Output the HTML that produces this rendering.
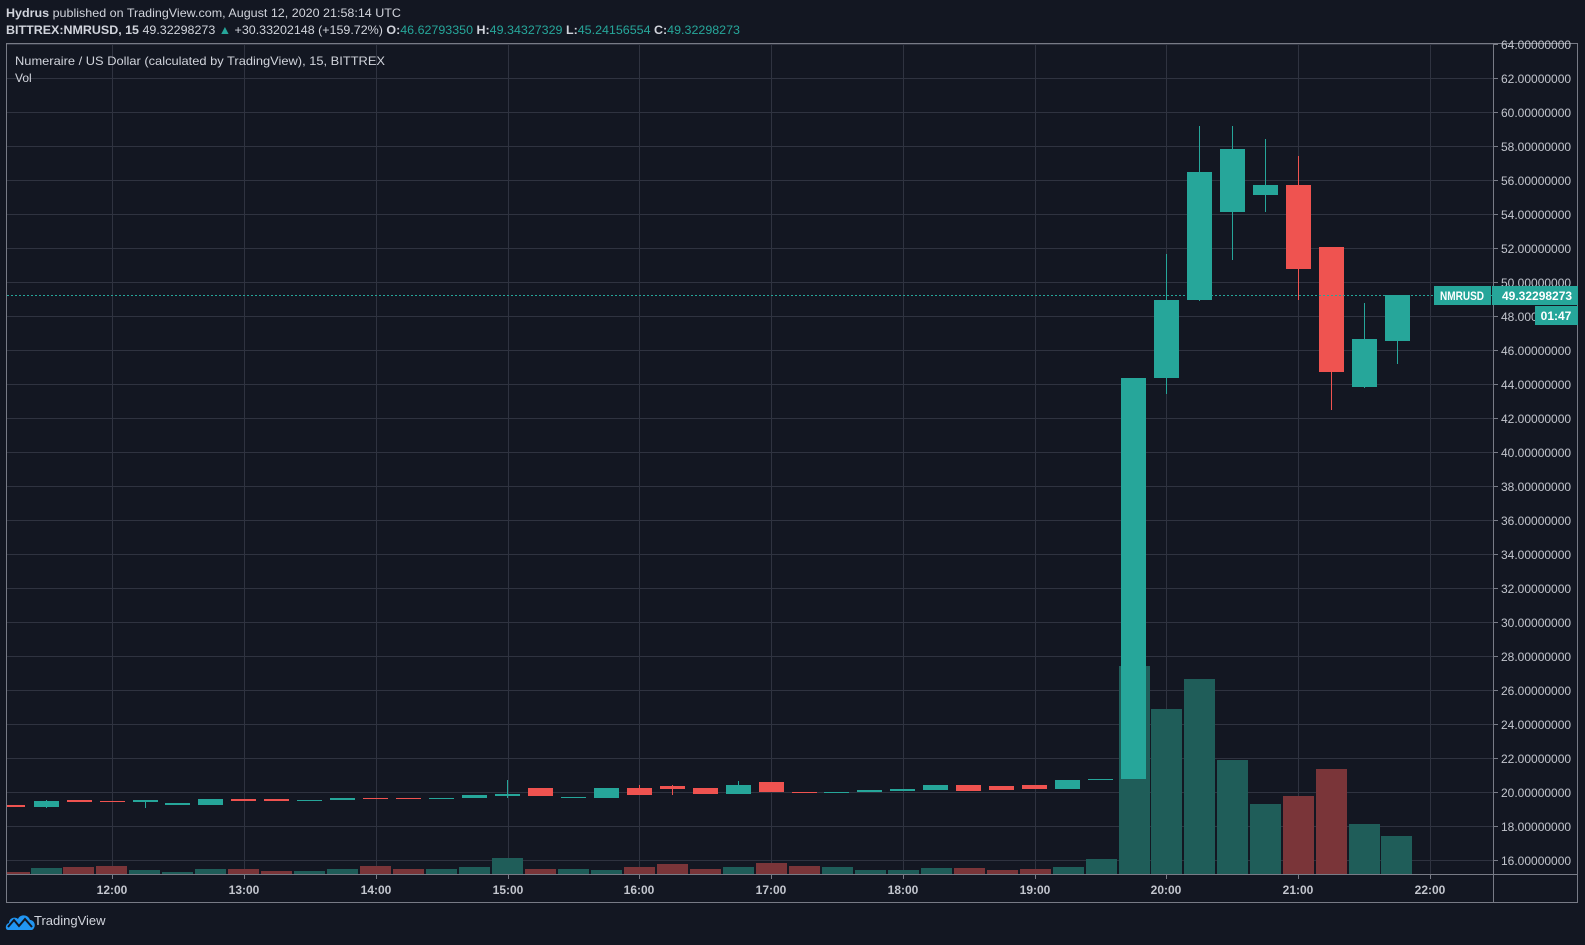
<!DOCTYPE html>
<html><head><meta charset="utf-8"><style>
body{margin:0;width:1585px;height:940px;background:#131722;overflow:hidden;font-family:"Liberation Sans",sans-serif;}
svg text{font-family:"Liberation Sans",sans-serif;}
</style></head><body>
<svg width="1585" height="940" xmlns="http://www.w3.org/2000/svg">
<rect width="1585" height="940" fill="#131722"/>
<text x="6" y="17" font-size="12" fill="#d1d4dc" textLength="395" lengthAdjust="spacingAndGlyphs"><tspan font-weight="bold">Hydrus</tspan> published on TradingView.com, August 12, 2020 21:58:14 UTC</text>
<text x="6" y="34" font-size="12" fill="#d1d4dc" textLength="734" lengthAdjust="spacingAndGlyphs"><tspan font-weight="bold">BITTREX:NMRUSD, 15</tspan> 49.32298273 <tspan fill="#26a69a">▲</tspan> +30.33202148 (+159.72%) <tspan font-weight="bold">O:</tspan><tspan fill="#26a69a">46.62793350</tspan> <tspan font-weight="bold">H:</tspan><tspan fill="#26a69a">49.34327329</tspan> <tspan font-weight="bold">L:</tspan><tspan fill="#26a69a">45.24156554</tspan> <tspan font-weight="bold">C:</tspan><tspan fill="#26a69a">49.32298273</tspan></text>
<g stroke="#2f3340" stroke-width="1">
<line x1="7" x2="1493" y1="44.5" y2="44.5"/><line x1="7" x2="1493" y1="78.5" y2="78.5"/><line x1="7" x2="1493" y1="112.5" y2="112.5"/><line x1="7" x2="1493" y1="146.5" y2="146.5"/><line x1="7" x2="1493" y1="180.5" y2="180.5"/><line x1="7" x2="1493" y1="214.5" y2="214.5"/><line x1="7" x2="1493" y1="248.5" y2="248.5"/><line x1="7" x2="1493" y1="282.5" y2="282.5"/><line x1="7" x2="1493" y1="316.5" y2="316.5"/><line x1="7" x2="1493" y1="350.5" y2="350.5"/><line x1="7" x2="1493" y1="384.5" y2="384.5"/><line x1="7" x2="1493" y1="418.5" y2="418.5"/><line x1="7" x2="1493" y1="452.5" y2="452.5"/><line x1="7" x2="1493" y1="486.5" y2="486.5"/><line x1="7" x2="1493" y1="520.5" y2="520.5"/><line x1="7" x2="1493" y1="554.5" y2="554.5"/><line x1="7" x2="1493" y1="588.5" y2="588.5"/><line x1="7" x2="1493" y1="622.5" y2="622.5"/><line x1="7" x2="1493" y1="656.5" y2="656.5"/><line x1="7" x2="1493" y1="690.5" y2="690.5"/><line x1="7" x2="1493" y1="724.5" y2="724.5"/><line x1="7" x2="1493" y1="758.5" y2="758.5"/><line x1="7" x2="1493" y1="792.5" y2="792.5"/><line x1="7" x2="1493" y1="826.5" y2="826.5"/><line x1="7" x2="1493" y1="860.5" y2="860.5"/>
<line y1="43" y2="874" x1="112.5" x2="112.5"/><line y1="43" y2="874" x1="244.5" x2="244.5"/><line y1="43" y2="874" x1="376.5" x2="376.5"/><line y1="43" y2="874" x1="508.5" x2="508.5"/><line y1="43" y2="874" x1="639.5" x2="639.5"/><line y1="43" y2="874" x1="771.5" x2="771.5"/><line y1="43" y2="874" x1="903.5" x2="903.5"/><line y1="43" y2="874" x1="1035.5" x2="1035.5"/><line y1="43" y2="874" x1="1166.5" x2="1166.5"/><line y1="43" y2="874" x1="1298.5" x2="1298.5"/><line y1="43" y2="874" x1="1430.5" x2="1430.5"/>
</g>
<text x="15" y="65" font-size="12" fill="#d1d4dc" textLength="370" lengthAdjust="spacingAndGlyphs">Numeraire / US Dollar (calculated by TradingView), 15, BITTREX</text>
<text x="15" y="82" font-size="12" fill="#d1d4dc">Vol</text>
<g>
<rect x="7" y="872" width="23" height="2" fill="#7a3539"/>
<rect x="31" y="868" width="31" height="6" fill="#1f5d59"/>
<rect x="63" y="867" width="31" height="7" fill="#7a3539"/>
<rect x="96" y="866" width="31" height="8" fill="#7a3539"/>
<rect x="129" y="870" width="31" height="4" fill="#1f5d59"/>
<rect x="162" y="872" width="31" height="2" fill="#1f5d59"/>
<rect x="195" y="869" width="31" height="5" fill="#1f5d59"/>
<rect x="228" y="869" width="31" height="5" fill="#7a3539"/>
<rect x="261" y="871" width="31" height="3" fill="#7a3539"/>
<rect x="294" y="871" width="31" height="3" fill="#1f5d59"/>
<rect x="327" y="869" width="31" height="5" fill="#1f5d59"/>
<rect x="360" y="866" width="31" height="8" fill="#7a3539"/>
<rect x="393" y="869" width="31" height="5" fill="#7a3539"/>
<rect x="426" y="869" width="31" height="5" fill="#1f5d59"/>
<rect x="459" y="867" width="31" height="7" fill="#1f5d59"/>
<rect x="492" y="858" width="31" height="16" fill="#1f5d59"/>
<rect x="525" y="869" width="31" height="5" fill="#7a3539"/>
<rect x="558" y="869" width="31" height="5" fill="#1f5d59"/>
<rect x="591" y="870" width="31" height="4" fill="#1f5d59"/>
<rect x="624" y="867" width="31" height="7" fill="#7a3539"/>
<rect x="657" y="864" width="31" height="10" fill="#7a3539"/>
<rect x="690" y="869" width="31" height="5" fill="#7a3539"/>
<rect x="723" y="867" width="31" height="7" fill="#1f5d59"/>
<rect x="756" y="863" width="31" height="11" fill="#7a3539"/>
<rect x="789" y="866" width="31" height="8" fill="#7a3539"/>
<rect x="822" y="867" width="31" height="7" fill="#1f5d59"/>
<rect x="855" y="870" width="31" height="4" fill="#1f5d59"/>
<rect x="888" y="870" width="31" height="4" fill="#1f5d59"/>
<rect x="921" y="868" width="31" height="6" fill="#1f5d59"/>
<rect x="954" y="868" width="31" height="6" fill="#7a3539"/>
<rect x="987" y="870" width="31" height="4" fill="#7a3539"/>
<rect x="1020" y="869" width="31" height="5" fill="#7a3539"/>
<rect x="1053" y="867" width="31" height="7" fill="#1f5d59"/>
<rect x="1086" y="859" width="31" height="15" fill="#1f5d59"/>
<rect x="1119" y="666" width="31" height="208" fill="#1f5d59"/>
<rect x="1151" y="709" width="31" height="165" fill="#1f5d59"/>
<rect x="1184" y="679" width="31" height="195" fill="#1f5d59"/>
<rect x="1217" y="760" width="31" height="114" fill="#1f5d59"/>
<rect x="1250" y="804" width="31" height="70" fill="#1f5d59"/>
<rect x="1283" y="796" width="31" height="78" fill="#7a3539"/>
<rect x="1316" y="769" width="31" height="105" fill="#7a3539"/>
<rect x="1349" y="824" width="31" height="50" fill="#1f5d59"/>
<rect x="1381" y="836" width="31" height="38" fill="#1f5d59"/>
</g>
<g>
<rect x="7" y="805" width="18" height="2" fill="#ef5350"/>
<line x1="46.5" x2="46.5" y1="800" y2="808" stroke="#26a69a"/><rect x="34" y="801" width="25" height="6" fill="#26a69a"/>
<rect x="67" y="800" width="25" height="2" fill="#ef5350"/>
<rect x="100" y="801" width="25" height="1" fill="#ef5350"/>
<line x1="145.5" x2="145.5" y1="800" y2="808" stroke="#26a69a"/><rect x="133" y="800" width="25" height="2" fill="#26a69a"/>
<rect x="165" y="803" width="25" height="2" fill="#26a69a"/>
<rect x="198" y="799" width="25" height="6" fill="#26a69a"/>
<rect x="231" y="799" width="25" height="2" fill="#ef5350"/>
<rect x="264" y="799" width="25" height="2" fill="#ef5350"/>
<rect x="297" y="800" width="25" height="1" fill="#26a69a"/>
<rect x="330" y="798" width="25" height="2" fill="#26a69a"/>
<rect x="363" y="798" width="25" height="1" fill="#ef5350"/>
<rect x="396" y="798" width="25" height="1" fill="#ef5350"/>
<rect x="429" y="798" width="25" height="1" fill="#26a69a"/>
<rect x="462" y="795" width="25" height="3" fill="#26a69a"/>
<line x1="507.5" x2="507.5" y1="780" y2="798" stroke="#26a69a"/><rect x="495" y="794" width="25" height="2" fill="#26a69a"/>
<rect x="528" y="788" width="25" height="8" fill="#ef5350"/>
<rect x="561" y="797" width="25" height="1" fill="#26a69a"/>
<rect x="594" y="788" width="25" height="10" fill="#26a69a"/>
<line x1="639.5" x2="639.5" y1="785" y2="795" stroke="#ef5350"/><rect x="627" y="788" width="25" height="7" fill="#ef5350"/>
<line x1="672.5" x2="672.5" y1="785" y2="795" stroke="#ef5350"/><rect x="660" y="786" width="25" height="3" fill="#ef5350"/>
<rect x="693" y="788" width="25" height="6" fill="#ef5350"/>
<line x1="738.5" x2="738.5" y1="781" y2="794" stroke="#26a69a"/><rect x="726" y="785" width="25" height="9" fill="#26a69a"/>
<rect x="759" y="782" width="25" height="10" fill="#ef5350"/>
<rect x="792" y="792" width="25" height="1" fill="#ef5350"/>
<rect x="824" y="792" width="25" height="1" fill="#26a69a"/>
<rect x="857" y="790" width="25" height="2" fill="#26a69a"/>
<rect x="890" y="789" width="25" height="2" fill="#26a69a"/>
<rect x="923" y="785" width="25" height="5" fill="#26a69a"/>
<rect x="956" y="785" width="25" height="6" fill="#ef5350"/>
<rect x="989" y="786" width="25" height="4" fill="#ef5350"/>
<rect x="1022" y="785" width="25" height="4" fill="#ef5350"/>
<rect x="1055" y="780" width="25" height="9" fill="#26a69a"/>
<rect x="1088" y="779" width="25" height="1" fill="#26a69a"/>
<rect x="1121" y="378" width="25" height="401" fill="#26a69a"/>
<line x1="1166.5" x2="1166.5" y1="254" y2="394" stroke="#26a69a"/><rect x="1154" y="300" width="25" height="78" fill="#26a69a"/>
<line x1="1199.5" x2="1199.5" y1="126" y2="301" stroke="#26a69a"/><rect x="1187" y="172" width="25" height="128" fill="#26a69a"/>
<line x1="1232.5" x2="1232.5" y1="126" y2="260" stroke="#26a69a"/><rect x="1220" y="149" width="25" height="63" fill="#26a69a"/>
<line x1="1265.5" x2="1265.5" y1="139" y2="212" stroke="#26a69a"/><rect x="1253" y="185" width="25" height="10" fill="#26a69a"/>
<line x1="1298.5" x2="1298.5" y1="156" y2="300" stroke="#ef5350"/><rect x="1286" y="185" width="25" height="84" fill="#ef5350"/>
<line x1="1331.5" x2="1331.5" y1="247" y2="410" stroke="#ef5350"/><rect x="1319" y="247" width="25" height="125" fill="#ef5350"/>
<line x1="1364.5" x2="1364.5" y1="303" y2="388" stroke="#26a69a"/><rect x="1352" y="339" width="25" height="48" fill="#26a69a"/>
<line x1="1397.5" x2="1397.5" y1="295" y2="364" stroke="#26a69a"/><rect x="1385" y="295" width="25" height="46" fill="#26a69a"/>
</g>
<line x1="7" x2="1493" y1="295.5" y2="295.5" stroke="#26a69a" stroke-dasharray="2,2"/>
<g stroke="#787b86" fill="none">
<line x1="6.5" x2="6.5" y1="43" y2="903"/>
<line x1="6" x2="1578" y1="43.5" y2="43.5"/>
<line x1="1493.5" x2="1493.5" y1="43" y2="903"/>
<line x1="1577.5" x2="1577.5" y1="43" y2="903"/>
<line x1="6" x2="1578" y1="874.5" y2="874.5"/>
<line x1="6" x2="1578" y1="902.5" y2="902.5"/>
</g>
<g stroke="#787b86">
<line x1="1494" x2="1498" y1="44.5" y2="44.5"/><line x1="1494" x2="1498" y1="78.5" y2="78.5"/><line x1="1494" x2="1498" y1="112.5" y2="112.5"/><line x1="1494" x2="1498" y1="146.5" y2="146.5"/><line x1="1494" x2="1498" y1="180.5" y2="180.5"/><line x1="1494" x2="1498" y1="214.5" y2="214.5"/><line x1="1494" x2="1498" y1="248.5" y2="248.5"/><line x1="1494" x2="1498" y1="282.5" y2="282.5"/><line x1="1494" x2="1498" y1="316.5" y2="316.5"/><line x1="1494" x2="1498" y1="350.5" y2="350.5"/><line x1="1494" x2="1498" y1="384.5" y2="384.5"/><line x1="1494" x2="1498" y1="418.5" y2="418.5"/><line x1="1494" x2="1498" y1="452.5" y2="452.5"/><line x1="1494" x2="1498" y1="486.5" y2="486.5"/><line x1="1494" x2="1498" y1="520.5" y2="520.5"/><line x1="1494" x2="1498" y1="554.5" y2="554.5"/><line x1="1494" x2="1498" y1="588.5" y2="588.5"/><line x1="1494" x2="1498" y1="622.5" y2="622.5"/><line x1="1494" x2="1498" y1="656.5" y2="656.5"/><line x1="1494" x2="1498" y1="690.5" y2="690.5"/><line x1="1494" x2="1498" y1="724.5" y2="724.5"/><line x1="1494" x2="1498" y1="758.5" y2="758.5"/><line x1="1494" x2="1498" y1="792.5" y2="792.5"/><line x1="1494" x2="1498" y1="826.5" y2="826.5"/><line x1="1494" x2="1498" y1="860.5" y2="860.5"/>
</g>
<g font-size="12" fill="#c3c6ce">
<text x="1501" y="49">64.00000000</text><text x="1501" y="83">62.00000000</text><text x="1501" y="117">60.00000000</text><text x="1501" y="151">58.00000000</text><text x="1501" y="185">56.00000000</text><text x="1501" y="219">54.00000000</text><text x="1501" y="253">52.00000000</text><text x="1501" y="287">50.00000000</text><text x="1501" y="321">48.00000000</text><text x="1501" y="355">46.00000000</text><text x="1501" y="389">44.00000000</text><text x="1501" y="423">42.00000000</text><text x="1501" y="457">40.00000000</text><text x="1501" y="491">38.00000000</text><text x="1501" y="525">36.00000000</text><text x="1501" y="559">34.00000000</text><text x="1501" y="593">32.00000000</text><text x="1501" y="627">30.00000000</text><text x="1501" y="661">28.00000000</text><text x="1501" y="695">26.00000000</text><text x="1501" y="729">24.00000000</text><text x="1501" y="763">22.00000000</text><text x="1501" y="797">20.00000000</text><text x="1501" y="831">18.00000000</text><text x="1501" y="865">16.00000000</text>
</g>
<g stroke="#787b86"><line x1="112.5" x2="112.5" y1="875" y2="879"/><line x1="244.5" x2="244.5" y1="875" y2="879"/><line x1="376.5" x2="376.5" y1="875" y2="879"/><line x1="508.5" x2="508.5" y1="875" y2="879"/><line x1="639.5" x2="639.5" y1="875" y2="879"/><line x1="771.5" x2="771.5" y1="875" y2="879"/><line x1="903.5" x2="903.5" y1="875" y2="879"/><line x1="1035.5" x2="1035.5" y1="875" y2="879"/><line x1="1166.5" x2="1166.5" y1="875" y2="879"/><line x1="1298.5" x2="1298.5" y1="875" y2="879"/><line x1="1430.5" x2="1430.5" y1="875" y2="879"/></g>
<g font-size="12" font-weight="bold" fill="#c3c6ce" text-anchor="middle">
<text x="112" y="894">12:00</text><text x="244" y="894">13:00</text><text x="376" y="894">14:00</text><text x="508" y="894">15:00</text><text x="639" y="894">16:00</text><text x="771" y="894">17:00</text><text x="903" y="894">18:00</text><text x="1035" y="894">19:00</text><text x="1166" y="894">20:00</text><text x="1298" y="894">21:00</text><text x="1430" y="894">22:00</text>
</g>
<rect x="1434" y="286" width="57" height="19" fill="#26a69a"/>
<text x="1462" y="300" font-size="12" fill="#ffffff" text-anchor="middle" font-weight="bold" textLength="44" lengthAdjust="spacingAndGlyphs">NMRUSD</text>
<rect x="1492" y="286" width="86" height="19" fill="#26a69a"/>
<text x="1502" y="300" font-size="12" fill="#ffffff" font-weight="bold">49.32298273</text>
<rect x="1535" y="306" width="43" height="19" fill="#26a69a"/>
<text x="1556" y="320" font-size="12" fill="#ffffff" text-anchor="middle" font-weight="bold">01:47</text>
<g transform="translate(6,912)">
<path d="M2 18 C-1 18 -1 12 3 11 C3 6 9 4 12 7 C14 2 22 2 24 8 C28 8 30 13 28 16 C27 18 26 18 25 18 Z" fill="#2196f3"/>
<path d="M2 15 L8 8 L13 14 L19 7 L26 15" stroke="#131722" stroke-width="2" fill="none"/>
</g>
<text x="34" y="925" font-size="13" fill="#d1d4dc">TradingView</text>
</svg>
</body></html>
